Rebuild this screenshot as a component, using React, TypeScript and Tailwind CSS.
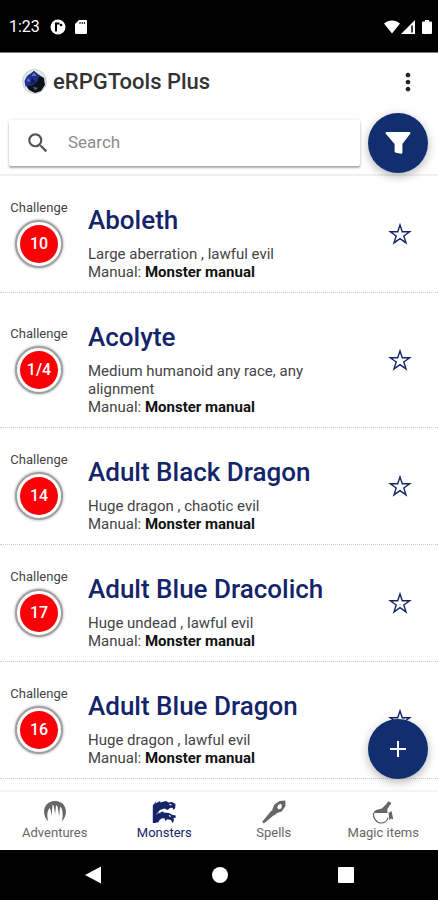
import React, { useState } from 'react';
import { MdMoreVert, MdSearch } from 'react-icons/md';
import clsx from 'clsx';

interface Monster {
  name: string;
  challenge: string;
  description: string;
  manual: string;
}

const monsters: Monster[] = [
  { name: 'Aboleth', challenge: '10', description: 'Large aberration , lawful evil', manual: 'Monster manual' },
  { name: 'Acolyte', challenge: '1/4', description: 'Medium humanoid any race, any alignment', manual: 'Monster manual' },
  { name: 'Adult Black Dragon', challenge: '14', description: 'Huge dragon , chaotic evil', manual: 'Monster manual' },
  { name: 'Adult Blue Dracolich', challenge: '17', description: 'Huge undead , lawful evil', manual: 'Monster manual' },
  { name: 'Adult Blue Dragon', challenge: '16', description: 'Huge dragon , lawful evil', manual: 'Monster manual' }
];

const tabs = [
  { label: 'Adventures', icon: <CaveIcon /> },
  { label: 'Monsters', icon: <DragonsIcon /> },
  { label: 'Spells', icon: <WandIcon /> },
  { label: 'Magic items', icon: <PotionIcon /> }
];

export default function App() {
  const [query, setQuery] = useState('');

  return (
    <div className="flex h-screen flex-col overflow-hidden bg-white font-[Roboto,sans-serif] text-[#222]">
      <StatusBar />

      {/* Header */}
      <header className="z-10 shrink-0 border-b-2 border-[#f0f0f0] bg-white">
        <div className="flex h-14 items-center pl-[22px] pr-4 pt-px">
          <DiceLogo />
          <h1 className="ml-[6px] flex-1 text-[22px] font-medium text-[#333]">eRPGTools Plus</h1>
          <button aria-label="More options" className="text-[#222]">
            <MdMoreVert className="size-7" />
          </button>
        </div>
        <div className="flex items-center gap-2 pb-px pl-[9px] pr-[10px] pt-1">
          <label className="flex h-[46px] flex-1 items-center rounded-xs bg-white pl-4 shadow-[0_2px_2px_rgba(0,0,0,0.3),0_0_3px_rgba(0,0,0,0.12)]">
            <MdSearch className="size-[26px] shrink-0 text-[#555]" />
            <input
              type="text"
              aria-label="Search"
              placeholder="Search"
              value={query}
              onChange={(e) => setQuery(e.target.value)}
              className="ml-[17px] w-full min-w-0 bg-transparent text-[17px] outline-none placeholder:text-[#8c8c8c]"
            />
          </label>
          <RoundButton label="Filter">
            <svg viewBox="0 0 26 24" className="h-6 w-[26px]" fill="currentColor">
              <path d="M1.6 1h22.8c1 0 1.4 1 .8 1.8L17.4 13v8.6c0 .8-.6 1.3-1.4 1.1l-5-.9c-.8-.2-1.4-.7-1.4-1.5V13L.8 2.8C.2 2 .6 1 1.6 1z" />
            </svg>
          </RoundButton>
        </div>
      </header>

      <main className="relative min-h-0 flex-1">
        <ul className="h-full overflow-hidden">
          {monsters.map((monster) => (
            <MonsterRow key={monster.name} monster={monster} />
          ))}
        </ul>
        <div className="absolute bottom-[11px] right-[10px]">
          <RoundButton label="Add monster">
            <svg viewBox="0 0 18 18" className="size-[18px]" fill="none" stroke="currentColor" strokeWidth="2">
              <path d="M9 1v16M1 9h16" />
            </svg>
          </RoundButton>
        </div>
      </main>

      {/* Tabs */}
      <nav className="flex h-[60px] shrink-0 border-t-2 border-[#f4f4f4] bg-white">
        {tabs.map((tab) => (
          <button
            key={tab.label}
            className={clsx(
              'flex flex-1 flex-col items-center pt-2 text-[13px] leading-[18px]',
              tab.label === 'Monsters' ? 'text-[#14256a]' : 'text-[#666]'
            )}
          >
            {tab.icon}
            {tab.label}
          </button>
        ))}
      </nav>

      <SystemBar />
    </div>
  );
}

function MonsterRow({ monster }: { monster: Monster }) {
  return (
    <li className="flex items-center border-b border-dotted border-[#ccc] pr-[26px]">
      <div className="flex w-[78px] shrink-0 flex-col items-center">
        <span className="text-[13px] leading-4 text-[#444]">Challenge</span>
        <div className="mt-1 flex size-12 items-center justify-center rounded-full border-2 border-[#a0a0a0] bg-white shadow-[0_0_3px_rgba(0,0,0,0.4)]">
          <span className="flex size-[38px] items-center justify-center rounded-full bg-[#fb0007] text-base font-medium text-white">
            {monster.challenge}
          </span>
        </div>
      </div>
      <div className="ml-[10px] min-w-0 flex-1 pb-[11px] pt-7">
        <h2 className="text-[26px] font-medium leading-8 text-[#13246a]">{monster.name}</h2>
        <p className="mt-[9px] max-w-[240px] text-[15px] leading-[18px] text-[#444]">{monster.description}</p>
        <p className="text-[15px] leading-[18px] text-[#444]">
          Manual: <strong className="font-bold text-[#111]">{monster.manual}</strong>
        </p>
      </div>
      <button aria-label={`Favourite ${monster.name}`} className="text-[#14256a]">
        <StarIcon />
      </button>
    </li>
  );
}

function RoundButton({ label, children }: { label: string; children: React.ReactNode }) {
  return (
    <button
      aria-label={label}
      className="flex size-[60px] shrink-0 items-center justify-center rounded-full bg-[#112f6e] text-white shadow-[0_3px_10px_rgba(0,0,0,0.3)]"
    >
      {children}
    </button>
  );
}

function StarIcon() {
  return (
    <svg viewBox="0 0 24 24" className="size-6" fill="none" stroke="currentColor" strokeWidth="1.4">
      <path d="M12 3l2.3 6.8h7.4l-5.9 4.2 2.2 6.9-6-4.3-6 4.3L8.2 14 2.3 9.8h7.4z" />
    </svg>
  );
}

function CaveIcon() {
  return (
    <svg viewBox="0 0 24 24" className="size-6" fill="currentColor">
      <path d="M5.5 21.5C-2 15 0 1 12 1s14 14 6.5 20.5c1.3-3 1.6-7 .5-12-.7-2-1.4-2.5-2-2.5l-.8 9-1.7-9.500-1.500-1.500-.9 9.500-1.300-8.500-1.200-1.500-1.100 11.500L7.500 9.500 6.500 8C3.500 12 4 17.500 5.500 21.500z" />
    </svg>
  );
}

function DragonsIcon() {
  return (
    <svg viewBox="0 0 24 24" className="size-6">
      <g fill="currentColor">
        {/* upper head and neck */}
        <path d="M.8 23V5.500L4 1.500l-.5 2L8.500.8 8 2.500 14 1l2.500 1.500L20 2l3.500 2-.3 4-1.700 2-1-2.200-2.500.2-2.500 2-3-1.500-4.500 1.500L4.500 14 4 23z" />
        {/* lower head */}
        <path d="M3.500 22.500v-7L7 12l-.3 1.500L11 11.300l.5 1.200 5.500.5 3.500 2 3.300.5-.3 2.500-2-.2.500 2.500-1.500 3-1.500-3.300-3.500-.8-2.500 1.800-.2-2.500c-3-1-5.500 1-6.500 4z" />
      </g>
      <path d="M17.500 4.300l2 .7M17 15.500l1.800 1" stroke="white" strokeWidth="1.200" />
    </svg>
  );
}

function WandIcon() {
  return (
    <svg viewBox="0 0 24 24" className="size-6">
      <path d="M1 23.200l-.3-2L9.500 10.500l3.700 3.400-10.700 9.200z" fill="currentColor" />
      <path d="M9.500 13.500l1-4.500 2-4.500L17.500 1l5.800-.5.200 5.500-3.800 5.500-4.500 1.500-3.500 2.500z" fill="currentColor" />
      <path d="M16.200 5l2.600-1.200 1.200 2-.8 2.700-2.600 1-1.400-1.900z" fill="white" />
    </svg>
  );
}

function PotionIcon() {
  return (
    <svg viewBox="0 0 24 24" className="size-6">
      <path
        d="M17.200 1.200l3 1.600-.6 1.900-.8.300-2.700 4.800.6 3.200H2.500c.6-1.800 2.100-3 4.300-3.500l4-1 4.700-4.600z"
        fill="currentColor"
      />
      <path d="M2.300 13c-.3 5 3 10 8 10 3.500 0 5.900-2.200 6.700-5.300" fill="none" stroke="currentColor" strokeWidth="1.200" />
      <path d="M17.500 13l3-2 1.800 8.500-2.300-1-1.600 1.800z" fill="currentColor" />
    </svg>
  );
}

function DiceLogo() {
  return (
    <svg viewBox="0 0 25 25" className="size-[25px]" aria-hidden="true">
      <circle cx="12.5" cy="12.5" r="12" fill="#dfe8e6" stroke="#aebcba" strokeWidth="0.6" />
      <path d="M12 2l5 4 5 3 1 7-4 6-6 2-6-3-2-3-2-5 3-5z" fill="#0c1018" />
      <path d="M12 2l5.500 5L15 13l-5 3.500-6.500 1L2.500 12 5 7z" fill="#1c2f8c" />
      <path d="M12 3.500l2.500 3.500H9.500zM6 9l3 3.500H4.500z" fill="#6478c0" />
      <path d="M10 9l4 4-6 2z" fill="#0d1b58" />
      <path d="M11 17.500l5 1.500-3 2.500z" fill="#555c68" />
    </svg>
  );
}

function StatusBar() {
  return (
    <div className="flex h-[53px] shrink-0 items-center border-b border-[#777] bg-black pl-[9px] pr-[6px] pt-[2px] text-white">
      <span className="text-base">1:23</span>
      <svg viewBox="0 0 16 16" className="ml-[10px] size-4">
        <circle cx="8" cy="8" r="7.5" fill="white" />
        <path d="M6 3.500v9M6 4.500h3.500" stroke="black" strokeWidth="2" fill="none" />
        <circle cx="11" cy="6" r="1.3" fill="black" />
      </svg>
      <svg viewBox="0 0 12 14" className="ml-[9px] h-[14px] w-3">
        <path d="M4 0h7a1 1 0 0 1 1 1v12a1 1 0 0 1-1 1H1a1 1 0 0 1-1-1V4z" fill="white" />
        <path d="M5 2v2M7.200 2v2M9.400 2v2" stroke="black" strokeWidth="1" />
      </svg>
      <span className="flex-1" />
      <svg viewBox="0 0 16 14" className="h-[14px] w-4">
        <path d="M0 3.500C4.500-.6 11.500-.6 16 3.500L8 13.500z" fill="white" />
      </svg>
      <svg viewBox="0 0 14 14" className="ml-[1px] size-[14px]">
        <path d="M14 0v14H0z" fill="white" />
        <path d="M11 5.500v7" stroke="black" strokeWidth="1.5" />
      </svg>
      <svg viewBox="0 0 10 14" className="ml-[7px] h-[14px] w-[10px]">
        <path d="M3 0h4v1.500h2a1 1 0 0 1 1 1V13a1 1 0 0 1-1 1H1a1 1 0 0 1-1-1V2.500a1 1 0 0 1 1-1h2z" fill="white" />
      </svg>
    </div>
  );
}

function SystemBar() {
  return (
    <div className="flex h-[50px] shrink-0 items-center justify-center gap-[110px] bg-black text-white">
      <button aria-label="Back">
        <svg viewBox="0 0 18 18" className="size-[18px]" fill="currentColor">
          <path d="M17 .5v17L1 9z" />
        </svg>
      </button>
      <button aria-label="Home" className="size-4 rounded-full bg-white" />
      <button aria-label="Recent apps" className="size-4 rounded-[1px] bg-white" />
    </div>
  );
}
